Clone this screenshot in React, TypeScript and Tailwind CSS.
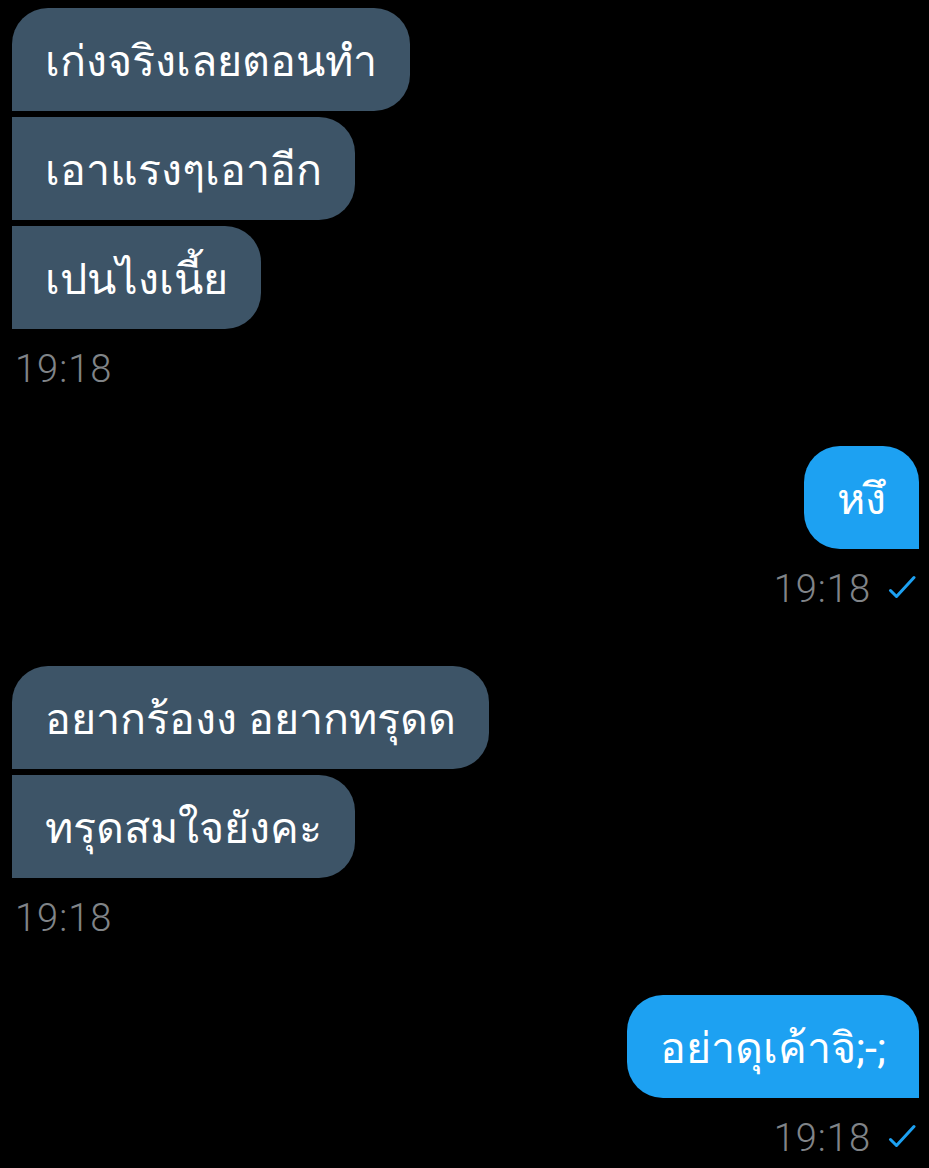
import React from "react";

function Left({ text, first }: { text: string; first?: boolean }) {
  return (
    <div
      className={`h-[103px] flex items-center px-[33px] pt-[4px] bg-[#3d5467] text-white text-[43px] self-start rounded-tr-[36px] rounded-br-[36px] ${
        first ? "rounded-tl-[36px]" : ""
      }`}
    >
      <span>{text}</span>
    </div>
  );
}

function Right({ text }: { text: string }) {
  return (
    <div className="h-[103px] flex items-center px-[33px] pt-[4px] bg-[#1da1f2] text-white text-[43px] self-end rounded-tl-[36px] rounded-tr-[36px] rounded-bl-[36px]">
      <span>{text}</span>
    </div>
  );
}

function Check() {
  return (
    <svg width="28" height="24" viewBox="0 0 28 24" fill="none" className="mt-[-4px]">
      <path d="M2.5 15.5 L8.5 21.5 L26 2.5" stroke="#1da1f2" strokeWidth="3" strokeLinecap="round" strokeLinejoin="round" />
    </svg>
  );
}

function Time({ right }: { right?: boolean }) {
  return (
    <div
      className={`mt-[18px] h-[44px] flex items-center ${
        right ? "justify-end gap-[17px] pr-[3px]" : "pl-[3px]"
      } text-[38px] font-light tracking-[1px] text-[#808488]`}
    >
      <span>19:18</span>
      {right && <Check />}
    </div>
  );
}

export default function App() {
  return (
    <div className="w-[929px] h-[1168px] bg-black overflow-hidden font-[Roboto,sans-serif]">
      <div className="flex flex-col pl-[12px] pr-[10px] pt-[8px]">
        <div className="flex flex-col gap-[6px]">
          <Left text="เก่งจริงเลยตอนทำ" first />
          <Left text="เอาแรงๆเอาอีก" />
          <Left text="เปนไงเนี้ย" />
        </div>
        <Time />

        <div className="mt-[55px] flex flex-col">
          <Right text="หงึ" />
        </div>
        <Time right />

        <div className="mt-[55px] flex flex-col gap-[6px]">
          <Left text="อยากร้องง อยากทรุดด" first />
          <Left text="ทรุดสมใจยังคะ" />
        </div>
        <Time />

        <div className="mt-[55px] flex flex-col">
          <Right text="อย่าดุเค้าจิ;-;" />
        </div>
        <Time right />
      </div>
    </div>
  );
}
